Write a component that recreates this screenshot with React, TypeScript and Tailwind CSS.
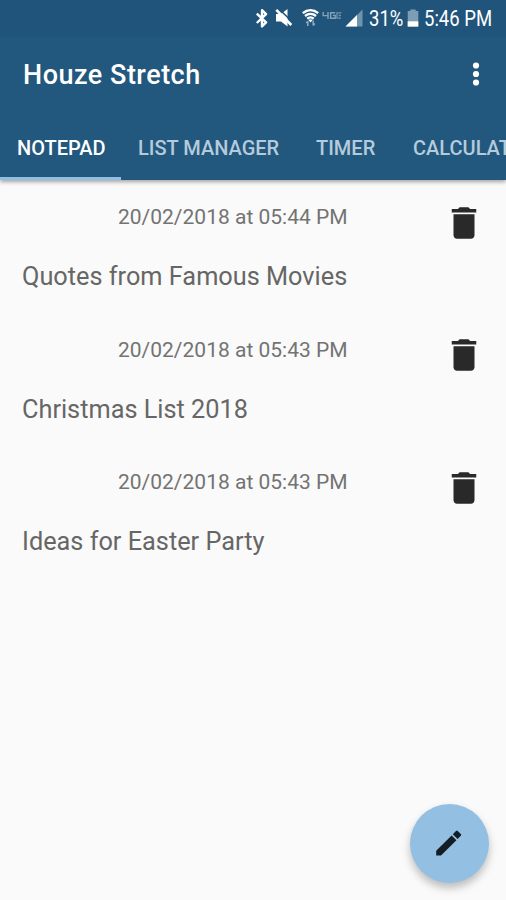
const tabs = [
  { label: 'NOTEPAD', className: 'w-[121px] pl-[17px] text-white' },
  { label: 'LIST MANAGER', className: 'w-[178px] pl-[17px] text-[#b5cbdc]' },
  { label: 'TIMER', className: 'w-[97px] pl-[17px] text-[#b5cbdc]' },
  { label: 'CALCULATOR', className: 'w-[160px] pl-[17px] text-[#b5cbdc]' },
]

const notes = [
  { date: '20/02/2018 at 05:44 PM', title: 'Quotes from Famous Movies' },
  { date: '20/02/2018 at 05:43 PM', title: 'Christmas List 2018' },
  { date: '20/02/2018 at 05:43 PM', title: 'Ideas for Easter Party' },
]

function StatusIcons() {
  return (
    <svg className="h-[37px] w-[114px] shrink-0" viewBox="252 0 114 37" fill="none">
      {/* Bluetooth */}
      <path d="M256.8 13.6l9.3 8.8-4.1 4V10.2l4.1 4-9.3 8.8" stroke="#fff" strokeWidth="2.4" strokeLinejoin="round" />
      {/* Muted speaker */}
      <path d="M276 14h5l6.5-5v17.5l-6.5-5h-5z" fill="#fff" />
      <path d="M279 9l14.5 14" stroke="#20547a" strokeWidth="1.6" />
      <path d="M276.3 9.8l15 15.2" stroke="#fff" strokeWidth="2.6" />
      {/* Wi-Fi with traffic arrows */}
      <path d="M302.8 13.2c4.7-3.9 10.7-3.9 15.4 0M305 16c3.3-2.6 7.7-2.6 11 0M307.2 18.6c2-1.5 4.6-1.5 6.6 0" stroke="#fff" strokeWidth="2.4" />
      <path d="M308 19.4h5l-2.5 3z" fill="#fff" />
      <path d="M307.8 26v-5M306.2 23l1.6-1.8M313.2 20.5v5M314.8 23.5l-1.6 2" stroke="#8aa9c0" strokeWidth="1.6" />
      {/* 4G LTE */}
      <path d="M323.2 12v3.6h5.4M328 12v7M335.2 12.8h-4.6v5.4h4.6v-2.8h-2.4" stroke="#84a2b8" strokeWidth="1.4" />
      <path d="M336.9 12.3v5.8h4.1M337.5 12.8h4M338.6 15.5h2.4" stroke="#7193ab" strokeWidth="1.3" />
      {/* Signal strength */}
      <path d="M362.5 9.5v17h-17z" fill="#6f94ae" />
      <path d="M357 15v11.5h-11.5z" fill="#fff" />
    </svg>
  )
}

function Battery() {
  return (
    <svg className="h-[37px] w-3 shrink-0" viewBox="0 0 12 37">
      <path d="M3.3 9.5h5.4V11h2.6v15.6H.7V11h2.6z" fill="#7d9db4" />
      <path d="M.7 21.3h10.6v5.3H.7z" fill="#fff" />
    </svg>
  )
}

function DeleteIcon() {
  return (
    <svg className="size-[42px]" viewBox="0 0 24 24" fill="#292929">
      <path d="M6 19c0 1.1.9 2 2 2h8c1.1 0 2-.9 2-2V7H6v12zM19 4h-3.5l-1-1h-5l-1 1H5v2h14V4z" />
    </svg>
  )
}

export default function App() {
  return (
    <div className="relative flex h-[900px] w-[506px] flex-col overflow-hidden bg-[#fafafa] font-['Roboto',sans-serif]">
      <header className="z-10 h-[180px] shrink-0 bg-[#22587e] shadow-[0_2px_4px_rgba(0,0,0,0.35)]">
        <div className="flex h-[37px] bg-[#20547a] pl-[252px] text-[21.5px] leading-[38px] text-white">
          <StatusIcons />
          <span className="w-[41px] shrink-0 whitespace-nowrap pl-[3px]">
            <span className="inline-block origin-left scale-x-[0.86]">31%</span>
          </span>
          <Battery />
          <span className="shrink-0 whitespace-nowrap pl-[5px]">
            <span className="inline-block origin-left scale-x-[0.86]">5:46 PM</span>
          </span>
        </div>
        <div className="flex h-[76px] items-center justify-between pl-[23px] pr-[26px]">
          <h1 className="text-[27px] font-medium tracking-[0.5px] text-white">Houze Stretch</h1>
          <svg className="-mt-[3px] h-6 w-2" viewBox="0 0 8 24" fill="#fff">
            <circle cx="4" cy="3.5" r="3.1" />
            <circle cx="4" cy="12" r="3.1" />
            <circle cx="4" cy="20.5" r="3.1" />
          </svg>
        </div>
        <nav className="flex h-[67px] overflow-hidden">
          {tabs.map((tab, i) => (
            <div key={tab.label} className="flex shrink-0 flex-col justify-between">
              <span className={`block whitespace-nowrap text-[20px] font-medium leading-[70px] h-[64px] ${tab.className}`}>
                {tab.label}
              </span>
              {i === 0 && <div className="h-[3px] bg-[#92bfe2]" />}
            </div>
          ))}
        </nav>
      </header>

      <main className="flex flex-col pt-[19px]">
        {notes.map((note, i) => (
          <article key={i} className="flex h-[132.5px] justify-between pl-[22px] pr-[21px]">
            <div className="flex flex-col">
              <time className="ml-[96px] h-9 whitespace-nowrap text-[21px] leading-[37px] text-[#737373]">{note.date}</time>
              <h2 className="mt-[24px] h-9 whitespace-nowrap text-[25.3px] leading-9 text-[#666]">{note.title}</h2>
            </div>
            <button className="mt-[2.5px] size-[42px]" aria-label="Delete">
              <DeleteIcon />
            </button>
          </article>
        ))}
      </main>

      <button
        className="absolute left-[409.5px] top-[803.5px] flex size-[79px] items-center justify-center rounded-full bg-[#92bfe2] shadow-[0_5px_8px_rgba(0,0,0,0.25)]"
        aria-label="New note"
      >
        <svg className="size-[34px]" viewBox="0 0 34 34" fill="#141c24">
          <path d="M4.2 29.4v-4.6L19.6 9.4l4.8 4.8L9 29.4zM20.8 8.2l3.2-3.3a1.2 1.2 0 0 1 1.7 0l3.1 3.1a1.2 1.2 0 0 1 0 1.7l-3.2 3.3z" />
        </svg>
      </button>
    </div>
  )
}
